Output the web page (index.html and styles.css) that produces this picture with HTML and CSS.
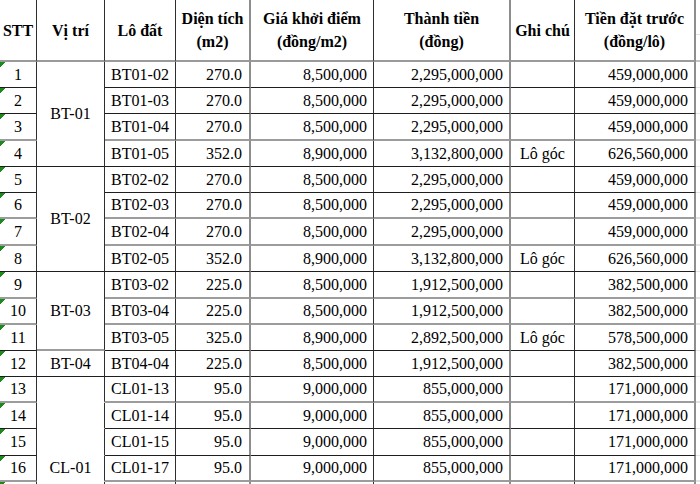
FILE: index.html
```html
<!DOCTYPE html>
<html lang="vi">
<head>
<meta charset="utf-8">
<title>Bảng giá lô đất</title>
<link rel="stylesheet" href="styles.css">
</head>
<body>
<table class="sheet">
  <colgroup>
    <col class="w-stt"><col class="w-vt"><col class="w-lo"><col class="w-dt"><col class="w-gia"><col class="w-tt"><col class="w-gc"><col class="w-tdt"><col class="w-x">
  </colgroup>
  <thead>
    <tr class="hd">
      <th>STT</th>
      <th>Vị trí</th>
      <th>Lô đất</th>
      <th class="dt">Diện tích<br>(m2)</th>
      <th>Giá khởi điểm<br>(đồng/m2)</th>
      <th class="tt">Thành tiền<br>(đồng)</th>
      <th>Ghi chú</th>
      <th class="tdt">Tiền đặt trước<br>(đồng/lô)</th>
      <th class="x"></th>
    </tr>
  </thead>
  <tbody>
    <tr class="h26">
      <td class="stt">1</td><td class="vt" rowspan="4">BT-01</td><td class="lo">BT01-02</td><td class="num dt">270.0</td><td class="num">8,500,000</td><td class="num tt">2,295,000,000</td><td class="gc"></td><td class="num tdt">459,000,000</td><td class="x"></td>
    </tr>
    <tr class="h26">
      <td class="stt">2</td><td class="lo">BT01-03</td><td class="num dt">270.0</td><td class="num">8,500,000</td><td class="num tt">2,295,000,000</td><td class="gc"></td><td class="num tdt">459,000,000</td><td class="x"></td>
    </tr>
    <tr class="h27 g">
      <td class="stt">3</td><td class="lo">BT01-04</td><td class="num dt">270.0</td><td class="num">8,500,000</td><td class="num tt">2,295,000,000</td><td class="gc"></td><td class="num tdt">459,000,000</td><td class="x"></td>
    </tr>
    <tr class="h26">
      <td class="stt">4</td><td class="lo">BT01-05</td><td class="num dt">352.0</td><td class="num">8,900,000</td><td class="num tt">3,132,800,000</td><td class="gc">Lô góc</td><td class="num tdt">626,560,000</td><td class="x"></td>
    </tr>
    <tr class="h26">
      <td class="stt">5</td><td class="vt" rowspan="4">BT-02</td><td class="lo">BT02-02</td><td class="num dt">270.0</td><td class="num">8,500,000</td><td class="num tt">2,295,000,000</td><td class="gc"></td><td class="num tdt">459,000,000</td><td class="x"></td>
    </tr>
    <tr class="h26 g">
      <td class="stt">6</td><td class="lo">BT02-03</td><td class="num dt">270.0</td><td class="num">8,500,000</td><td class="num tt">2,295,000,000</td><td class="gc"></td><td class="num tdt">459,000,000</td><td class="x"></td>
    </tr>
    <tr class="h27 g">
      <td class="stt">7</td><td class="lo">BT02-04</td><td class="num dt">270.0</td><td class="num">8,500,000</td><td class="num tt">2,295,000,000</td><td class="gc"></td><td class="num tdt">459,000,000</td><td class="x"></td>
    </tr>
    <tr class="h26">
      <td class="stt">8</td><td class="lo">BT02-05</td><td class="num dt">352.0</td><td class="num">8,900,000</td><td class="num tt">3,132,800,000</td><td class="gc">Lô góc</td><td class="num tdt">626,560,000</td><td class="x"></td>
    </tr>
    <tr class="h27 g">
      <td class="stt">9</td><td class="vt" rowspan="3">BT-03</td><td class="lo">BT03-02</td><td class="num dt">225.0</td><td class="num">8,500,000</td><td class="num tt">1,912,500,000</td><td class="gc"></td><td class="num tdt">382,500,000</td><td class="x"></td>
    </tr>
    <tr class="h26 g">
      <td class="stt">10</td><td class="lo">BT03-04</td><td class="num dt">225.0</td><td class="num">8,500,000</td><td class="num tt">1,912,500,000</td><td class="gc"></td><td class="num tdt">382,500,000</td><td class="x"></td>
    </tr>
    <tr class="h26">
      <td class="stt">11</td><td class="lo">BT03-05</td><td class="num dt">325.0</td><td class="num">8,900,000</td><td class="num tt">2,892,500,000</td><td class="gc">Lô góc</td><td class="num tdt">578,500,000</td><td class="x"></td>
    </tr>
    <tr class="h26">
      <td class="stt">12</td><td class="vt">BT-04</td><td class="lo">BT04-04</td><td class="num dt">225.0</td><td class="num">8,500,000</td><td class="num tt">1,912,500,000</td><td class="gc"></td><td class="num tdt">382,500,000</td><td class="x"></td>
    </tr>
    <tr class="h26 g">
      <td class="stt">13</td><td class="vt vopen"></td><td class="lo">CL01-13</td><td class="num dt">95.0</td><td class="num">9,000,000</td><td class="num tt">855,000,000</td><td class="gc"></td><td class="num tdt">171,000,000</td><td class="x"></td>
    </tr>
    <tr class="h26">
      <td class="stt">14</td><td class="vt vopen"></td><td class="lo">CL01-14</td><td class="num dt">95.0</td><td class="num">9,000,000</td><td class="num tt">855,000,000</td><td class="gc"></td><td class="num tdt">171,000,000</td><td class="x"></td>
    </tr>
    <tr class="h27">
      <td class="stt">15</td><td class="vt vopen"></td><td class="lo">CL01-15</td><td class="num dt">95.0</td><td class="num">9,000,000</td><td class="num tt">855,000,000</td><td class="gc"></td><td class="num tdt">171,000,000</td><td class="x"></td>
    </tr>
    <tr class="h26 g">
      <td class="stt">16</td><td class="vt vopen">CL-01</td><td class="lo">CL01-17</td><td class="num dt">95.0</td><td class="num">9,000,000</td><td class="num tt">855,000,000</td><td class="gc"></td><td class="num tdt">171,000,000</td><td class="x"></td>
    </tr>
    <tr class="h26">
      <td class="stt"></td><td class="vt vopen"></td><td class="lo"></td><td class="num dt"></td><td class="num"></td><td class="num tt"></td><td class="gc"></td><td class="num tdt"></td><td class="x"></td>
    </tr>
  </tbody>
</table>
</body>
</html>
```
FILE: styles.css
```css
html, body {
  margin: 0;
  padding: 0;
  background: #ffffff;
}

body {
  font-family: "Liberation Serif", "Times New Roman", serif;
  color: #000000;
  width: 700px;
  height: 484px;
  overflow: hidden;
}

.sheet {
  border-collapse: separate;
  border-spacing: 0;
  table-layout: fixed;
  width: 700px;
}

.w-stt { width: 37px; }
.w-vt { width: 68px; }
.w-lo { width: 71px; }
.w-dt { width: 75px; }
.w-gia { width: 123px; }
.w-tt { width: 137px; }
.w-gc { width: 64px; }
.w-tdt { width: 121px; }
.w-x { width: 4px; }

.sheet th,
.sheet td {
  box-sizing: border-box;
  padding: 0 6px 0 4px;
  border-right: 1px solid #2e2e2e;
  border-bottom: 1px solid #1e1e1e;
  font-size: 16px;
  line-height: 18px;
  white-space: nowrap;
  overflow: hidden;
  vertical-align: middle;
  text-align: center;
}

.sheet th {
  font-weight: bold;
  line-height: 23px;
  padding: 0;
  border-bottom: 2px solid #9a9a9a;
}

.hd { height: 62px; }
.h26 { height: 26px; }
.h27 { height: 27px; }

.sheet tr.g td {
  border-bottom: 2px solid #9c9c9c;
}

.sheet .dt,
.sheet .tt,
.sheet .tdt {
  border-right: 2px solid #8e8e8e;
}

.sheet td.num {
  text-align: right;
  padding-right: 6px;
}

.sheet td.num.dt {
  padding-right: 7px;
}

.sheet td.stt {
  padding: 0;
  background: linear-gradient(135deg, #1c8a1c 0, #1c8a1c 3.6px, transparent 3.6px) no-repeat 0 0 / 8px 8px;
}

.sheet td.vt {
  padding: 0;
}

.sheet td.vopen,
.sheet tr.g td.vopen {
  border-bottom-color: transparent;
}

.sheet td.lo,
.sheet td.gc {
  padding: 0;
}

.sheet th.x,
.sheet td.x {
  padding: 0;
  border-right: 0;
  border-bottom-color: #e3e3e3;
}

.sheet tr.g td.x {
  border-bottom-color: #e3e3e3;
}

.sheet th.x {
  border-bottom-color: #c4c4c4;
  background: linear-gradient(to bottom, transparent 34px, #e3e3e3 34px, #e3e3e3 35px, transparent 35px);
}
```
